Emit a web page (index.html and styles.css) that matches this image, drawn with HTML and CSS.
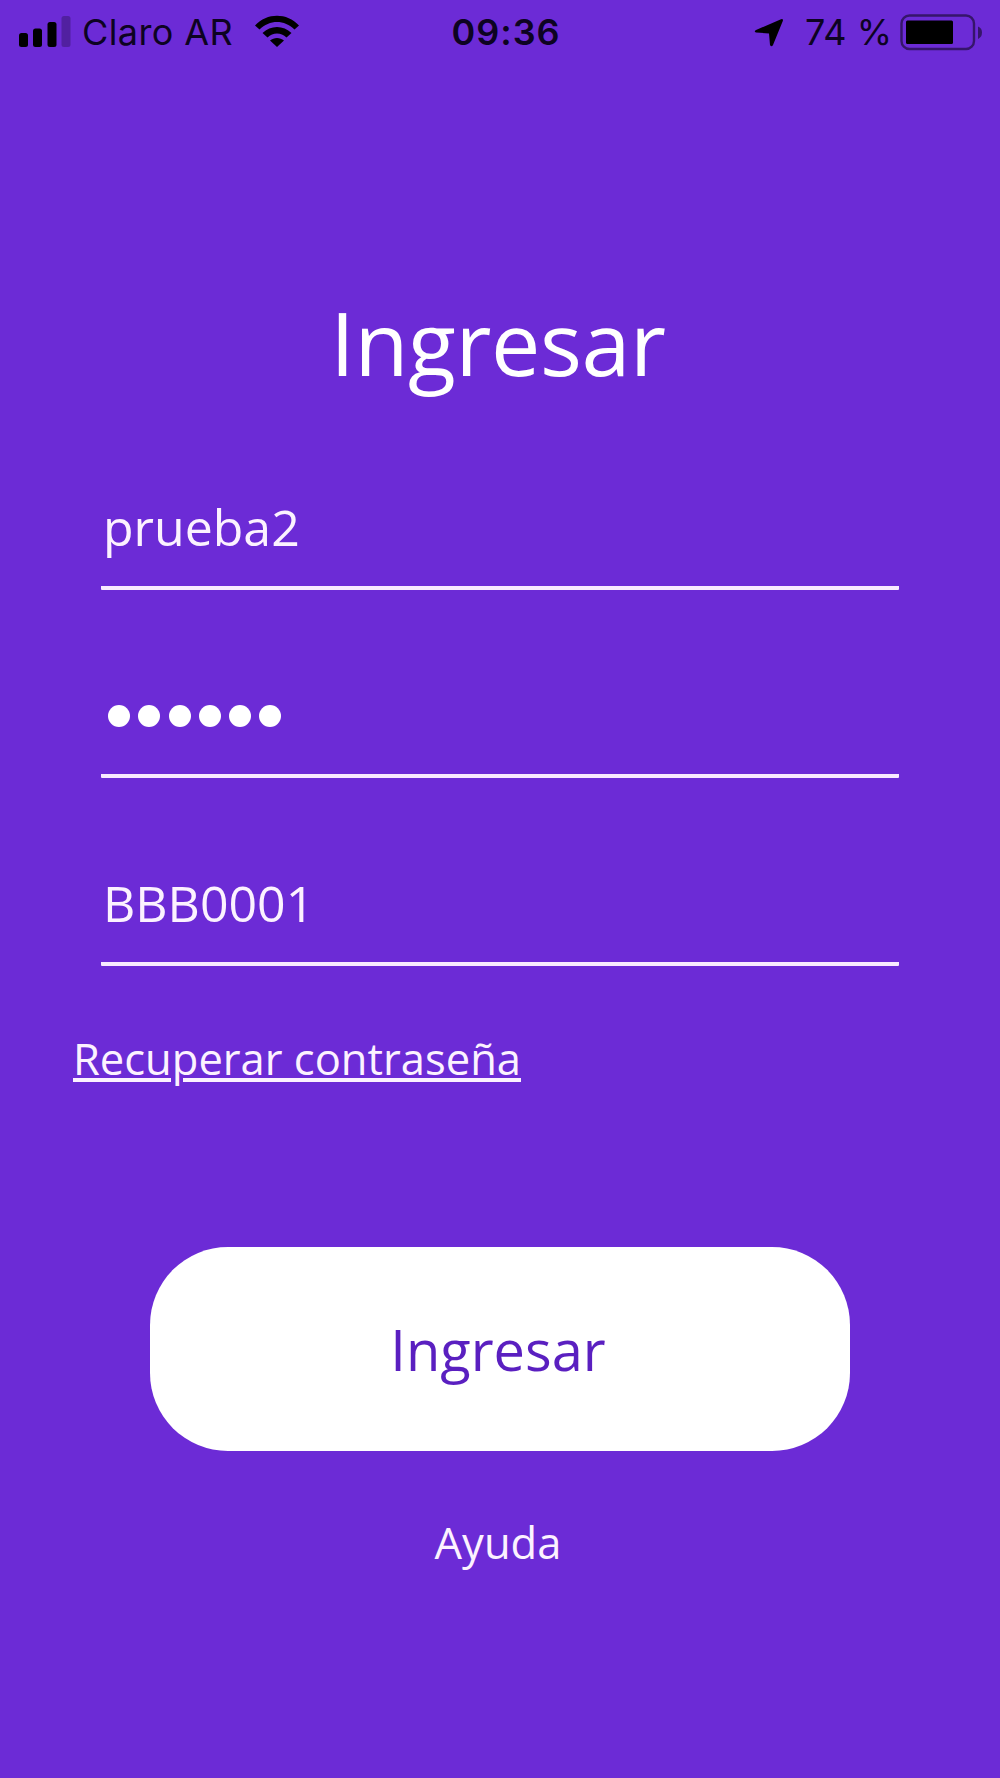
FILE: index.html
```html
<!DOCTYPE html>
<html lang="es">

<head>

<meta charset="utf-8">
<meta name="viewport" content="width=device-width, initial-scale=1.0">

<link rel="stylesheet" href="styles.css">

<title>Ingresar</title>

</head>

<body>

<header class="statusbar">
  <div class="carrier">
    <svg class="signal" width="54" height="34" viewBox="0 0 54 34">
      <rect x="1" y="18" width="9" height="14" rx="2.5"/>
      <rect x="15" y="13.5" width="9" height="18.5" rx="2.5"/>
      <rect x="29.5" y="7" width="9" height="25" rx="2.5"/>
      <rect x="43.5" y="1" width="9" height="31" rx="2.5" opacity=".25"/>
    </svg>
    <span class="carrier-name">Claro AR</span>
    <svg class="wifi" width="46" height="34" viewBox="0 0 46 34">
      <path d="M1 11.5C13-1.500 33-1.500 45 11.500L40.500 15.500C30.500 5.500 15.500 5.500 5.500 15.500Z"/>
      <path d="M8.500 19C16.500 11 29.500 11 37.500 19L32.500 23.500C27 18 19 18 13.500 23.500Z"/>
      <path d="M16 26.500C20 23 26 23 30 26.500L23 33Z"/>
    </svg>
  </div>
  <div class="clock">09:36</div>
  <div class="power">
    <svg class="location" width="30" height="30" viewBox="0 0 30 30">
      <path d="M27 1.200Q29.500 .5 28.800 3L19 27Q17.500 29.500 16 27L15 15.500L2 14.500Q-.5 13.500 2 12Z"/>
    </svg>
    <span class="percent">74 %</span>
    <svg class="battery" width="84" height="38" viewBox="0 0 84 38">
      <rect x="1.500" y="1.500" width="72.500" height="33.500" rx="8" fill="none" stroke="#000" stroke-width="2.400" opacity=".5"/>
      <rect x="6" y="6.500" width="47" height="23.500" rx="1.500"/>
      <path d="M78 12.500Q82 14 82 18.500T78 25Z" opacity=".5"/>
    </svg>
  </div>
</header>

<main class="login">
  <h1>Ingresar</h1>

  <div class="fields">
    <div class="field">prueba2</div>
    <div class="field password">
      <i></i><i></i><i></i><i></i><i></i><i></i>
    </div>
    <div class="field">BBB0001</div>
  </div>

  <a class="recover" href="#">Recuperar contraseña</a>
  <button class="submit" type="button">Ingresar</button>
  <a class="help" href="#">Ayuda</a>
</main>

</body>
</html>
```
FILE: styles.css
```css
html, body {
  margin: 0;
  background-color: #6c2bd6;
  font-family: 'Open Sans', 'Noto Sans', sans-serif;
}

body {
  height: 1778px;
  overflow: hidden;
}

/* status bar */
.statusbar {
  display: grid;
  grid-template-columns: 440px 130px 1fr;
  height: 64px;
  color: #0d0322;
  font-family: Inter, 'Liberation Sans', sans-serif;
  font-size: 36px;
  line-height: 64px;
  white-space: nowrap;
}

.statusbar svg {
  flex: none;
}

.carrier, .power {
  display: flex;
  align-items: flex-start;
}

.signal {
  margin: 15px 0 0 18px;
}

.carrier-name {
  width: 172px;
  margin-left: 10px;
  letter-spacing: 0.4px;
}

.wifi {
  margin-top: 14px;
}

.clock {
  text-align: center;
  font-weight: 600;
  letter-spacing: 1px;
  padding-left: 2px;
}

.location {
  margin: 18px 0 0 184px;
}

.percent {
  width: 95px;
  margin-left: 21px;
}

.battery {
  margin-top: 14px;
}

/* login form */
.login {
  display: flex;
  flex-direction: column;
  align-items: center;
  padding-top: 218px;
  color: #fcf2ff;
}

h1 {
  margin: 0;
  padding-right: 4px;
  color: #fff;
  font-size: 88px;
  font-weight: 400;
  line-height: 120px;
  letter-spacing: -0.4px;
}

.fields {
  display: flex;
  flex-direction: column;
  gap: 91px;
  width: 798px;
  margin-top: 91px;
}

.field {
  box-sizing: border-box;
  height: 97px;
  padding-left: 2px;
  border-bottom: 4px solid #f8eaff;
  border-radius: 1px;
  font-size: 50px;
  line-height: 68px;
}

.password {
  display: flex;
  gap: 8.3px;
  padding: 24px 0 0 7px;
}

.password i {
  width: 22px;
  height: 22px;
  border-radius: 50%;
  background: #fff;
}

.recover {
  align-self: flex-start;
  margin: 63px 0 0 73px;
  color: inherit;
  font-size: 43.5px;
  line-height: 60px;
}

.submit {
  width: 700px;
  height: 204px;
  margin-top: 158px;
  padding: 0 4px 0 0;
  border: 0;
  border-radius: 78px;
  background: #fff;
  color: #5a1fc0;
  font-family: inherit;
  font-size: 56px;
  line-height: 76px;
}

.help {
  margin: 62px 4px 0 0;
  color: inherit;
  font-size: 43.5px;
  line-height: 60px;
  text-decoration: none;
}
```
